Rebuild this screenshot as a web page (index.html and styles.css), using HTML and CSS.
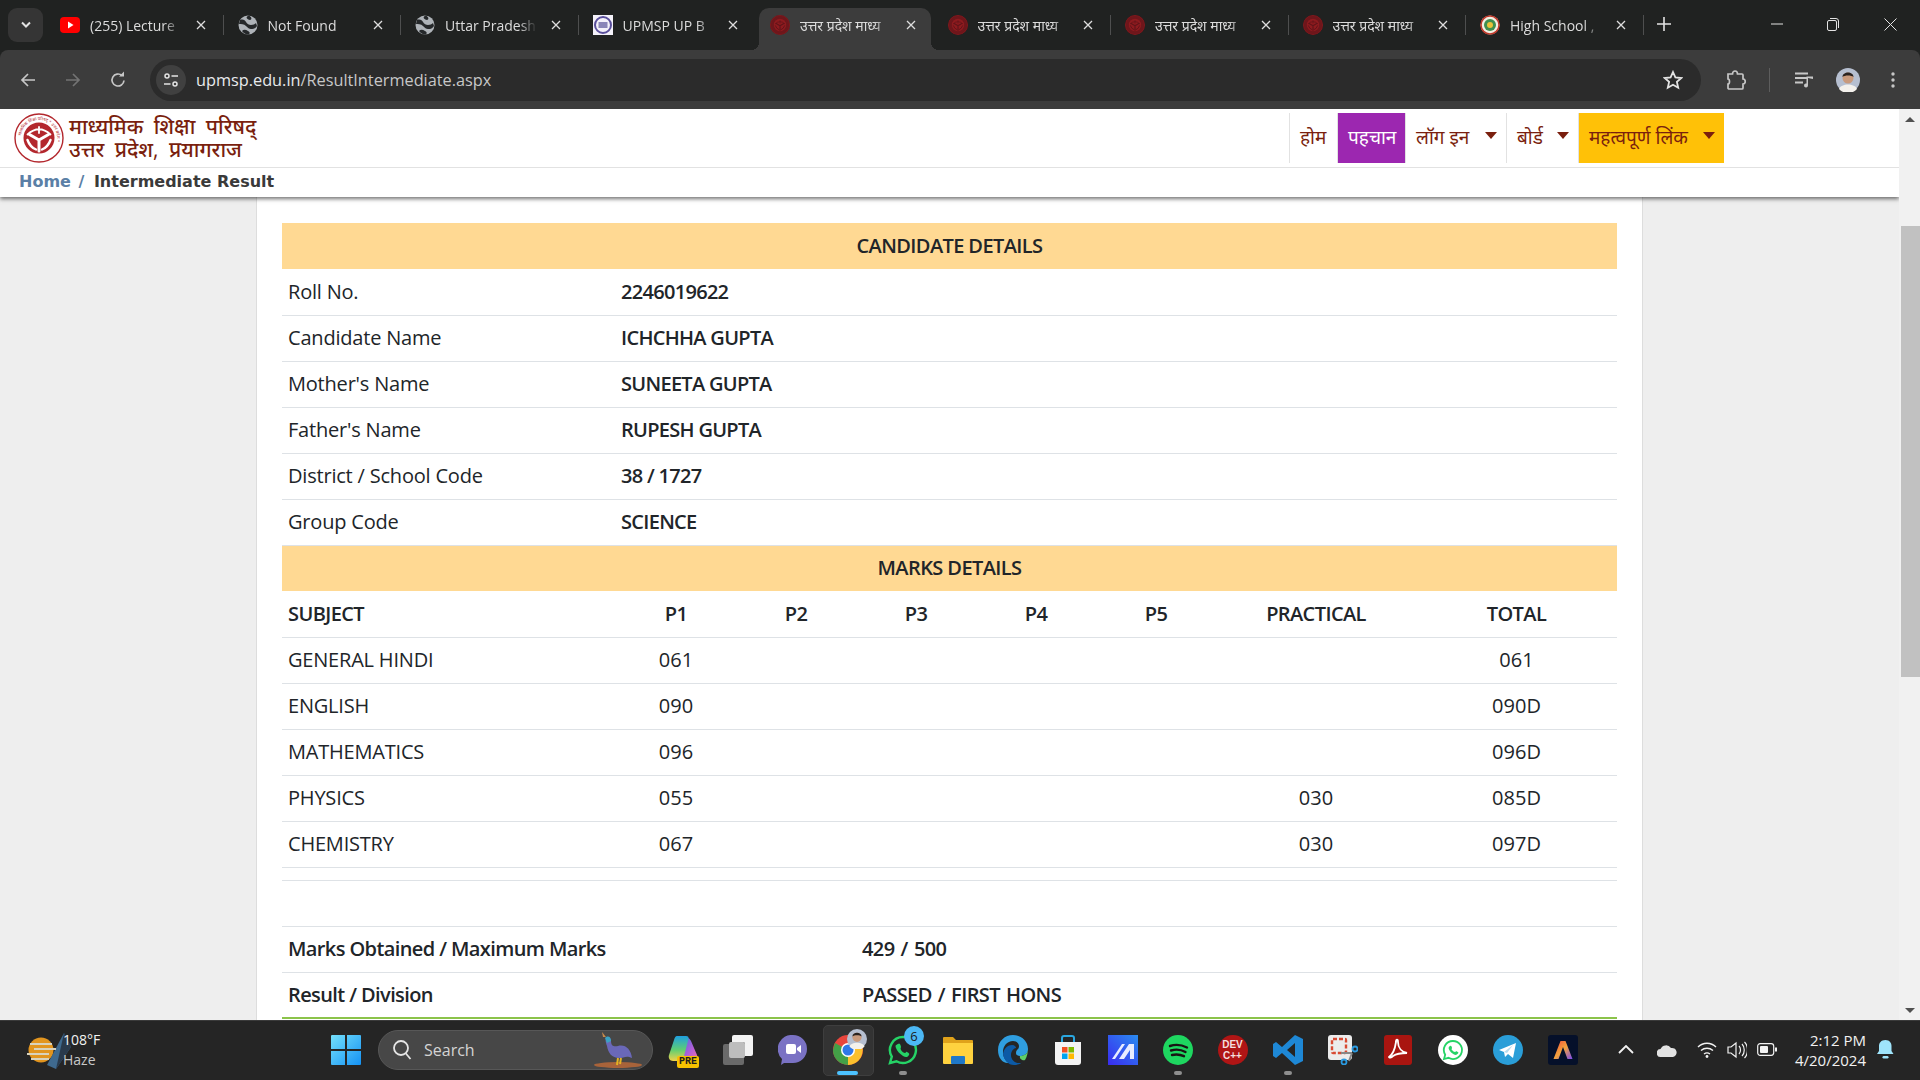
FILE: index.html
```html
<!DOCTYPE html>
<html lang="hi">
<head>
    <meta charset="UTF-8">
    <title>Intermediate Result</title>
    <link rel="stylesheet" href="styles.css">
</head>
<body>
    <svg class="defs" width="0" height="0">
        <symbol id="emblem" viewBox="0 0 50 50">
            <circle cx="25" cy="25" r="24" fill="none" stroke="currentColor" stroke-width="1.4"/>
            <circle cx="25" cy="25" r="15.500" fill="currentColor"/>
            <g fill="none" stroke="var(--emblem-light, #fff)" stroke-linecap="round">
                <path d="M25 27L15.500 21.500M25 27L34.500 21.500M25 27V38" stroke-width="3"/>
                <path d="M13.500 21.500Q25 11 36.500 21.500M25 14v6" stroke-width="1.800"/>
                <path d="M13.500 27Q16 34 22 36.500M36.500 27Q34 34 28 36.500" stroke-width="2.400"/>
            </g>
        </symbol>
        <symbol id="globe" viewBox="0 0 20 20">
            <circle cx="10" cy="10" r="9.500" fill="#aeb3b8"/>
            <path d="M2 5c3-1 5 0 6 2s3 3 5 3 4-1 5-2l1 3c-2 3-4 3-6 3s-3-1-5-3-5-2-7-2zM11 .5c2 1 3 3 2 4s-3 0-4-1 0-2.500 2-3zM4 16c2-2 4-1 6 0s2 2 1 3.500c-3 .5-5-1-7-3.500z" fill="#25282a"/>
        </symbol>
        <symbol id="close-x" viewBox="0 0 10 10">
            <path d="M1 1l8 8M9 1l-8 8" fill="none" stroke="currentColor" stroke-width="1.3"/>
        </symbol>
    </svg>

    <div class="tabstrip">
        <div class="tab-search">
            <svg width="12" height="8" viewBox="0 0 12 8"><path d="M2 1.500l4 4 4-4" fill="none" stroke="#e3e3e3" stroke-width="2"/></svg>
        </div>
        <div class="tabs">
            <div class="tab">
                <svg class="tab-icon" viewBox="0 0 20 20"><rect y="2" width="20" height="16" rx="4" fill="#f00"/><path d="M8 6.500l5.500 3.500L8 13.500z" fill="#fff"/></svg>
                <span class="tab-title">(255) Lecture</span>
                <svg class="tab-close"><use href="#close-x"/></svg>
            </div>
            <div class="tab">
                <svg class="tab-icon"><use href="#globe"/></svg>
                <span class="tab-title">Not Found</span>
                <svg class="tab-close"><use href="#close-x"/></svg>
            </div>
            <div class="tab">
                <svg class="tab-icon"><use href="#globe"/></svg>
                <span class="tab-title">Uttar Pradesh</span>
                <svg class="tab-close"><use href="#close-x"/></svg>
            </div>
            <div class="tab tab-nosep">
                <svg class="tab-icon" viewBox="0 0 20 20"><rect width="20" height="20" fill="#f4f2fa"/><circle cx="10" cy="10" r="8" fill="none" stroke="#5a4f9c" stroke-width="2"/><rect x="5.500" y="7" width="9" height="6" fill="#8a86b8"/></svg>
                <span class="tab-title">UPMSP UP B</span>
                <svg class="tab-close"><use href="#close-x"/></svg>
            </div>
            <div class="tab tab-active tab-nosep">
                <svg class="tab-icon emblem-dark"><use href="#emblem"/></svg>
                <span class="tab-title">उत्तर प्रदेश माध्य</span>
                <svg class="tab-close"><use href="#close-x"/></svg>
            </div>
            <div class="tab">
                <svg class="tab-icon emblem-dark"><use href="#emblem"/></svg>
                <span class="tab-title">उत्तर प्रदेश माध्य</span>
                <svg class="tab-close"><use href="#close-x"/></svg>
            </div>
            <div class="tab">
                <svg class="tab-icon emblem-dark"><use href="#emblem"/></svg>
                <span class="tab-title">उत्तर प्रदेश माध्य</span>
                <svg class="tab-close"><use href="#close-x"/></svg>
            </div>
            <div class="tab">
                <svg class="tab-icon emblem-dark"><use href="#emblem"/></svg>
                <span class="tab-title">उत्तर प्रदेश माध्य</span>
                <svg class="tab-close"><use href="#close-x"/></svg>
            </div>
            <div class="tab">
                <svg class="tab-icon" viewBox="0 0 20 20"><circle cx="10" cy="10" r="9.500" fill="#f2efe4"/><circle cx="10" cy="10" r="9" fill="none" stroke="#c0392b" stroke-width="1.500"/><circle cx="10" cy="10" r="6" fill="#3f8f4f"/><circle cx="10" cy="10" r="3" fill="#e8c23a"/></svg>
                <span class="tab-title">High School ,</span>
                <svg class="tab-close"><use href="#close-x"/></svg>
            </div>
        </div>
        <svg class="new-tab" width="14" height="14" viewBox="0 0 14 14"><path d="M7 0v14M0 7h14" stroke="#e3e3e3" stroke-width="1.600"/></svg>
        <div class="window-controls">
            <svg class="win-min" width="12" height="2" viewBox="0 0 12 2"><path d="M0 1h12" stroke="#e3e3e3"/></svg>
            <svg class="win-max" width="12" height="13" viewBox="0 0 12 13"><rect x=".5" y="2.500" width="9" height="10" rx="1.500" fill="none" stroke="#e3e3e3"/><path d="M3 .5h6a2.500 2.500 0 0 1 2.500 2.500v7" fill="none" stroke="#e3e3e3"/></svg>
            <svg class="win-close" width="13" height="13" viewBox="0 0 13 13"><path d="M.5.5l12 12M12.500.5l-12 12" stroke="#e3e3e3"/></svg>
        </div>
    </div>

    <div class="toolbar">
        <button class="tool-btn">
            <svg width="18" height="18" viewBox="0 0 18 18"><path d="M16 9H3M9 3L3 9l6 6" fill="none" stroke="#c7c7c7" stroke-width="1.700"/></svg>
        </button>
        <button class="tool-btn">
            <svg width="18" height="18" viewBox="0 0 18 18"><path d="M2 9h13M9 3l6 6-6 6" fill="none" stroke="#737373" stroke-width="1.700"/></svg>
        </button>
        <button class="tool-btn">
            <svg width="18" height="18" viewBox="0 0 18 18"><path d="M15 9.500A6 6 0 1 1 13 4.500" fill="none" stroke="#c7c7c7" stroke-width="1.700"/><path d="M10 5.500h5v-5z" fill="#c7c7c7"/></svg>
        </button>
        <div class="omnibox">
            <span class="site-info">
                <svg width="16" height="16" viewBox="0 0 16 16"><circle cx="4" cy="4" r="2" fill="none" stroke="#e3e3e3" stroke-width="1.500"/><path d="M8.500 4H15M1 12h6.500" stroke="#e3e3e3" stroke-width="1.500"/><circle cx="12" cy="12" r="2" fill="none" stroke="#e3e3e3" stroke-width="1.500"/></svg>
            </span>
            <span class="url"><span class="url-host">upmsp.edu.in</span>/ResultIntermediate.aspx</span>
            <svg class="star" width="20" height="20" viewBox="0 0 20 20"><path d="M10 2l2.400 5.400 5.900.6-4.400 3.900 1.300 5.800L10 14.700l-5.200 3 1.300-5.800L1.700 8l5.900-.6z" fill="none" stroke="#e3e3e3" stroke-width="1.800"/></svg>
        </div>
        <svg class="puzzle" width="20" height="22" viewBox="0 0 20 22"><path d="M2 5h4.500c0-4 5-4 5 0H16a1 1 0 0 1 1 1v4c3 0 3 5 0 5v4a1 1 0 0 1-1 1H3a1 1 0 0 1-1-1v-4c2 0 2-5 0-5z" fill="none" stroke="#c7c7c7" stroke-width="1.700"/></svg>
        <span class="tool-sep"></span>
        <svg class="media" width="20" height="18" viewBox="0 0 20 18"><path d="M1 2.500h13M1 7h13M1 11.500h8" stroke="#c7c7c7" stroke-width="1.800"/><path d="M14 7v7.500a2 2 0 1 1-1.500-2V5.500H19V8z" fill="#c7c7c7"/></svg>
        <svg class="avatar" width="24" height="24" viewBox="0 0 24 24"><circle cx="12" cy="12" r="12" fill="#b6bfd0"/><circle cx="12" cy="10" r="5.500" fill="#c99a7c"/><path d="M6.500 9c0-6 11-6 11 0-2-2-9-2-11 0z" fill="#2a2320"/><path d="M3 21c2-6 16-6 18 0a12 12 0 0 1-18 0z" fill="#f4f1ec"/></svg>
        <svg class="kebab" width="4" height="16" viewBox="0 0 4 16"><circle cx="2" cy="2" r="1.700" fill="#c7c7c7"/><circle cx="2" cy="8" r="1.700" fill="#c7c7c7"/><circle cx="2" cy="14" r="1.700" fill="#c7c7c7"/></svg>
    </div>

    <div class="viewport">
        <div class="site">
            <header class="site-header">
                <div class="brand-row">
                    <a class="brand">
                        <svg class="logo" viewBox="0 0 50 50">
                            <defs><path id="ring" d="M25 25m-18 0a18 18 0 1 1 36 0a18 18 0 1 1-36 0"/></defs>
                            <use href="#emblem"/>
                            <text class="logo-ring"><textPath href="#ring" startOffset="2%">माध्यमिक शिक्षा परिषद् * उत्तर प्रदेश *</textPath></text>
                        </svg>
                        <span class="brand-text">
                            <span>माध्यमिक शिक्षा परिषद्</span>
                            <span>उत्तर प्रदेश, प्रयागराज</span>
                        </span>
                    </a>
                    <nav class="main-nav">
                        <a class="nav-item nav-home">होम</a>
                        <a class="nav-item nav-id">पहचान</a>
                        <a class="nav-item nav-login">लॉग इन <i class="caret"></i></a>
                        <a class="nav-item nav-board">बोर्ड <i class="caret"></i></a>
                        <a class="nav-item nav-links">महत्वपूर्ण लिंक <i class="caret"></i></a>
                    </nav>
                </div>
                <div class="breadcrumb"><a>Home /</a> <span>Intermediate Result</span></div>
            </header>

            <main class="panel">
                <table class="result-table">
                    <colgroup>
                        <col class="col-subject">
                        <col class="col-paper"><col class="col-paper"><col class="col-paper"><col class="col-paper"><col class="col-paper">
                        <col class="col-practical">
                        <col>
                    </colgroup>
                    <tr class="band"><td colspan="8">CANDIDATE DETAILS</td></tr>
                    <tr><td>Roll No.</td><td colspan="7" class="val">2246019622</td></tr>
                    <tr><td>Candidate Name</td><td colspan="7" class="val">ICHCHHA GUPTA</td></tr>
                    <tr><td>Mother's Name</td><td colspan="7" class="val">SUNEETA GUPTA</td></tr>
                    <tr><td>Father's Name</td><td colspan="7" class="val">RUPESH GUPTA</td></tr>
                    <tr><td>District / School Code</td><td colspan="7" class="val">38 / 1727</td></tr>
                    <tr><td>Group Code</td><td colspan="7" class="val">SCIENCE</td></tr>
                    <tr class="band"><td colspan="8">MARKS DETAILS</td></tr>
                    <tr class="marks-head">
                        <td>SUBJECT</td><td>P1</td><td>P2</td><td>P3</td><td>P4</td><td>P5</td><td>PRACTICAL</td><td>TOTAL</td>
                    </tr>
                    <tr class="marks"><td>GENERAL HINDI</td><td>061</td><td></td><td></td><td></td><td></td><td></td><td>061</td></tr>
                    <tr class="marks"><td>ENGLISH</td><td>090</td><td></td><td></td><td></td><td></td><td></td><td>090D</td></tr>
                    <tr class="marks"><td>MATHEMATICS</td><td>096</td><td></td><td></td><td></td><td></td><td></td><td>096D</td></tr>
                    <tr class="marks"><td>PHYSICS</td><td>055</td><td></td><td></td><td></td><td></td><td>030</td><td>085D</td></tr>
                    <tr class="marks"><td>CHEMISTRY</td><td>067</td><td></td><td></td><td></td><td></td><td>030</td><td>097D</td></tr>
                </table>
                <div class="result-gap"></div>
                <table class="summary-table">
                    <tr><td>Marks Obtained / Maximum Marks</td><td>429 / 500</td></tr>
                    <tr><td>Result / Division</td><td>PASSED / FIRST HONS</td></tr>
                    <tr class="summary-end"><td colspan="2"></td></tr>
                </table>
            </main>
        </div>
        <div class="scrollbar">
            <i class="arrow-up"></i>
            <div class="thumb"></div>
            <i class="arrow-down"></i>
        </div>
    </div>

    <footer class="taskbar">
        <div class="weather">
            <svg class="weather-icon" width="48" height="42" viewBox="0 0 48 42">
                <circle cx="17" cy="21" r="12.500" fill="#e2951f"/>
                <path d="M40 4L47 18 32 40 23 36z" fill="#3f6a8f"/>
                <path d="M40 4L47 18 32 40z" fill="#2a3a4c"/>
                <path d="M6 15h22M10 20h22M3 25h22M7 30h18" stroke="#d8d2bc" stroke-width="2"/>
            </svg>
            <div class="weather-text"><span>108°F</span><span class="weather-sub">Haze</span></div>
        </div>
        <svg class="start" width="30" height="30" viewBox="0 0 30 30">
            <defs><linearGradient id="win" x1="0" y1="0" x2="1" y2="1"><stop offset="0" stop-color="#74e0fb"/><stop offset="1" stop-color="#1592f4"/></linearGradient></defs>
            <path d="M0 1a1 1 0 0 1 1-1h13v14H0zM16 0h13a1 1 0 0 1 1 1v13H16zM0 16h14v14H1a1 1 0 0 1-1-1zM16 16h14v13a1 1 0 0 1-1 1H16z" fill="url(#win)"/>
        </svg>
        <div class="search-box">
            <svg width="20" height="22" viewBox="0 0 20 22"><circle cx="9" cy="9" r="7" fill="none" stroke="#e6e6e6" stroke-width="1.800"/><path d="M13.500 14l5 6" stroke="#e6e6e6" stroke-width="1.800"/></svg>
            <span>Search</span>
            <svg class="search-bird" width="52" height="40" viewBox="0 0 50 40">
                <ellipse cx="25" cy="35" rx="24" ry="3" fill="#a8633a"/>
                <path d="M13 8c3-2 5 0 5 3 0 5 3 6 7 5 7-2 13 3 14 12-6-3-8 0-13 0-7 0-11-5-12-12-1-3-2-5-1-8z" fill="#6a68b8"/>
                <path d="M12 8c3-3 6-1 6 3l-4 2z" fill="#3aa3c4"/>
                <path d="M9 2l4 5-3 0z" fill="#c98a4a"/>
                <path d="M25 28l-1 7M28 28l-1 6" stroke="#e4b322" stroke-width="2"/>
            </svg>
        </div>
        <div class="task-icons">
            <span class="task-icon">
                <svg viewBox="0 0 30 30">
                    <defs>
                        <linearGradient id="cop-a" x1="0" y1="0" x2="0" y2="1"><stop offset="0" stop-color="#1f9fe0"/><stop offset=".55" stop-color="#5fce72"/><stop offset="1" stop-color="#f2d24a"/></linearGradient>
                        <linearGradient id="cop-b" x1="0" y1="0" x2="1" y2="1"><stop offset="0" stop-color="#3a6fe0"/><stop offset=".6" stop-color="#b45fd8"/><stop offset="1" stop-color="#f070a8"/></linearGradient>
                    </defs>
                    <path d="M17 3c2-1 5 0 6 3l6 14c1 3-1 6-4 6H12z" fill="url(#cop-b)"/>
                    <path d="M9 1h9c2 0 3 1 2.500 3L16 21c-1 3-3 5-6 5H5c-3 0-5-3-4-6L6 5c.5-2 1.500-4 3-4z" fill="url(#cop-a)"/>
                </svg>
                <b class="pre-badge">PRE</b>
            </span>
            <span class="task-icon">
                <svg viewBox="0 0 30 30"><rect y="9" width="21" height="21" rx="2" fill="#6a6a6a"/><rect x="6" y="7" width="16" height="16" rx="2" fill="#bdbdbd"/><path d="M9 2a2 2 0 0 1 2-2h17a2 2 0 0 1 2 2v17a2 2 0 0 1-2 2h-6V9a2 2 0 0 0-2-2H9z" fill="#f3f3f3"/></svg>
            </span>
            <span class="task-icon">
                <svg viewBox="0 0 30 30"><path d="M15 0a14 14 0 0 1 0 28H6l-3 2 1-6A14 14 0 0 1 15 0z" fill="#7a72c4"/><rect x="8" y="9" width="10" height="10" rx="2" fill="#fff"/><path d="M19 13l4-3v8l-4-3z" fill="#fff"/></svg>
            </span>
            <span class="task-icon task-active">
                <svg viewBox="0 0 30 30"><circle cx="15" cy="15" r="15" fill="#e8453c"/><path d="M15 15l13-7a15 15 0 0 1-13 22z" fill="#fbc02d"/><path d="M15 15L2 8 0 15a15 15 0 0 0 15 15z" fill="#43a047"/><circle cx="15" cy="15" r="7" fill="#fff"/><circle cx="15" cy="15" r="5.500" fill="#2f78e8"/></svg>
                <svg class="chrome-avatar" viewBox="0 0 24 24"><circle cx="12" cy="12" r="12" fill="#b6bfd0"/><circle cx="12" cy="10" r="5.500" fill="#c99a7c"/><path d="M6.500 9c0-6 11-6 11 0-2-2-9-2-11 0z" fill="#2a2320"/><path d="M3 21c2-6 16-6 18 0a12 12 0 0 1-18 0z" fill="#f4f1ec"/></svg>
            </span>
            <span class="task-icon task-running">
                <svg viewBox="0 0 30 30"><path d="M15 2a13 13 0 1 1-6.500 24.300L2 28l1.800-6.300A13 13 0 0 1 15 2z" fill="none" stroke="#25d366" stroke-width="2.400"/><path d="M10 9c2-2 3 2 3 3s-1 1 0 3 3 3 4 3 1-2 2-1 3 1 2 3-3 3-6 1-6-5-7-8 0-3 2-4z" fill="#25d366"/></svg>
                <b class="count-badge">6</b>
            </span>
            <span class="task-icon">
                <svg viewBox="0 0 30 30"><path d="M0 3a1 1 0 0 1 1-1h9l3 3h16a1 1 0 0 1 1 1v6H0z" fill="#e0a21a"/><path d="M0 8h30v20a1 1 0 0 1-1 1H1a1 1 0 0 1-1-1z" fill="#ffd23f"/><rect x="8" y="21" width="14" height="8" rx="1" fill="#1f78c8"/></svg>
            </span>
            <span class="task-icon">
                <svg viewBox="0 0 30 30"><path d="M15 0c8 0 15 6 15 14 0 5-4 7-8 7-2 0-4-1-4-3 0-4 3-3 3-7 0-3-3-5-6-5-6 0-10 5-10 11 0 4 2 9 6 11C5 29 0 23 0 15 0 6 7 0 15 0z" fill="#2f9ee0"/><path d="M5 19c1-6 5-9 9-9 3 0 4 2 4 3-2 0-5 3-5 7 0 5 4 8 8 8 2 0 3 0 4-1-3 2-6 3-9 3-6 0-10-5-11-11z" fill="#0c5aa6"/><path d="M22 21c4 0 8-2 8-7 0 3-1 8-3 11-2 1-6-1-5-4z" fill="#5fd068"/></svg>
            </span>
            <span class="task-icon">
                <svg viewBox="0 0 30 30"><path d="M2 7h26v20a3 3 0 0 1-3 3H5a3 3 0 0 1-3-3z" fill="#f3f3f3"/><path d="M9 7V3a2 2 0 0 1 2-2h8a2 2 0 0 1 2 2v4" fill="none" stroke="#2aa7e0" stroke-width="2"/><rect x="9" y="12" width="5.500" height="5.500" fill="#f25022"/><rect x="15.500" y="12" width="5.500" height="5.500" fill="#7fba00"/><rect x="9" y="18.500" width="5.500" height="5.500" fill="#00a4ef"/><rect x="15.500" y="18.500" width="5.500" height="5.500" fill="#ffb900"/></svg>
            </span>
            <span class="task-icon">
                <svg viewBox="0 0 30 30"><defs><linearGradient id="mm" x1="0" y1="1" x2="1" y2="0"><stop offset="0" stop-color="#3a2bf0"/><stop offset="1" stop-color="#2a8cf0"/></linearGradient></defs><rect width="30" height="30" fill="url(#mm)"/><path d="M4 24L14 9h3L7 24zM11 24L21 9h5v15h-4v-9l-6 9z" fill="#e8ecff"/></svg>
            </span>
            <span class="task-icon task-running">
                <svg viewBox="0 0 30 30"><circle cx="15" cy="15" r="15" fill="#1ed760"/><path d="M7 11c6-2 12-1 17 1.500M8 15.500c5-1.500 10-1 14.500 1.500M9 20c4-1 8-.7 12 1.200" fill="none" stroke="#191414" stroke-width="2.400" stroke-linecap="round"/></svg>
            </span>
            <span class="task-icon">
                <span class="dev-icon">DEV<br>C++</span>
            </span>
            <span class="task-icon task-running">
                <svg viewBox="0 0 30 30"><path d="M22 0l8 4v22l-8 4-13-12-6 5-3-2v-12l3-2 6 5zM22 8l-8 7 8 7z" fill="#1e88d6"/></svg>
            </span>
            <span class="task-icon">
                <svg viewBox="0 0 30 30"><rect width="24" height="25" rx="3" fill="#ececec"/><rect x="4" y="4" width="14" height="14" rx="1" fill="none" stroke="#d84a33" stroke-width="2.400" stroke-dasharray="4 2"/><path d="M13 18l11 0M24 18l-3 8" stroke="#888" stroke-width="2"/><circle cx="27" cy="14" r="2.500" fill="none" stroke="#2a9ae0" stroke-width="1.800"/><circle cx="16" cy="27" r="2.500" fill="none" stroke="#2a9ae0" stroke-width="1.800"/></svg>
            </span>
            <span class="task-icon">
                <svg viewBox="0 0 30 30"><rect x="1" width="28" height="30" rx="3" fill="#a91510"/><path d="M6 22c3-2 6-8 7-15 0-3 2-3 2 0 0 6 4 10 9 11-5 0-11 1-14 3-2 2-4 2-4 1z" fill="none" stroke="#fff" stroke-width="1.800"/></svg>
            </span>
            <span class="task-icon">
                <svg viewBox="0 0 30 30"><circle cx="15" cy="15" r="15" fill="#fff"/><path d="M15 6a9 9 0 1 1-4.500 16.800L6 24l1.200-4.300A9 9 0 0 1 15 6z" fill="none" stroke="#25d366" stroke-width="1.800"/><path d="M12 11c1-1 2 1 2 2s-1 1 0 2 2 2 3 2 1-1 2-.5 2 1 1 2-2 2-4 1-4-3-5-5 0-3 1-3.500z" fill="#25d366"/></svg>
            </span>
            <span class="task-icon">
                <svg viewBox="0 0 30 30"><circle cx="15" cy="15" r="15" fill="#2a9ed8"/><path d="M6 15l17-7-3 15-5-4-3 3-1-5z" fill="#fff"/><path d="M11 17l9-7-6 8z" fill="#b8dcef"/></svg>
            </span>
            <span class="task-icon">
                <svg viewBox="0 0 30 30"><defs><linearGradient id="ae" x1="0" y1="0" x2="1" y2="1"><stop offset="0" stop-color="#f24a3c"/><stop offset=".5" stop-color="#f2a23c"/><stop offset="1" stop-color="#7a4af2"/></linearGradient></defs><rect width="30" height="30" rx="3" fill="#05102a"/><path d="M12.500 6h5l7 18h-5l-4.500-12-4.500 12h-5z" fill="url(#ae)"/></svg>
            </span>
        </div>
        <div class="tray">
            <svg class="tray-chevron" width="16" height="9" viewBox="0 0 16 9"><path d="M1 8l7-7 7 7" fill="none" stroke="#f2f2f2" stroke-width="1.800"/></svg>
            <svg class="tray-cloud" width="20" height="14" viewBox="0 0 20 14"><path d="M4 14a4 4 0 0 1-.500-8A6 6 0 0 1 14 5a4.500 4.500 0 0 1 2 9z" fill="#e2e2e2"/></svg>
            <svg class="tray-wifi" width="20" height="17" viewBox="0 0 20 17"><path d="M1 6c5-5 13-5 18 0M4 9.500c3.500-3 8.500-3 12 0M7 13c2-1.500 4-1.500 6 0" fill="none" stroke="#f2f2f2" stroke-width="1.400"/><circle cx="10" cy="15.500" r="1.400" fill="#f2f2f2"/></svg>
            <svg class="tray-volume" width="20" height="18" viewBox="0 0 20 18"><path d="M1 6h3l5-4v14l-5-4H1z" fill="none" stroke="#f2f2f2" stroke-width="1.200"/><path d="M12 5c2 2 2 6 0 8M15 3c3 3 3 9 0 12M17.500 1c4 4 4 12 0 16" fill="none" stroke="#f2f2f2" stroke-width="1.200"/></svg>
            <svg class="tray-battery" width="20" height="13" viewBox="0 0 20 13"><rect x=".7" y=".7" width="16" height="11.600" rx="2.500" fill="none" stroke="#f2f2f2" stroke-width="1.200"/><rect x="3" y="3" width="8" height="7" rx="1" fill="#f2f2f2"/><rect x="18" y="4.500" width="2" height="4" fill="#f2f2f2"/></svg>
            <div class="clock"><span>2:12 PM</span><span>4/20/2024</span></div>
            <svg class="tray-bell" width="17" height="20" viewBox="0 0 17 20"><path d="M8.500 0c4 0 6 3 6 6v5l2 3H0l2-3V6c0-3 2-6 6.500-6z" fill="#9fe4fb"/><rect x="5.500" y="16" width="6" height="2.500" rx="1.200" fill="#9fe4fb"/></svg>
        </div>
    </footer>
</body>
</html>
```
FILE: styles.css
```css
* {
    box-sizing: border-box;
}
html, body {
    margin: 0;
    width: 1920px;
    height: 1080px;
    overflow: hidden;
}
body {
    display: flex;
    flex-direction: column;
    font-family: "Open Sans", "Noto Sans", "Noto Sans Devanagari", sans-serif;
    background: #202221;
}
.defs {
    position: absolute;
}

/* browser tabs */
.tabstrip {
    height: 50px;
    display: flex;
    align-items: flex-end;
    padding-left: 8px;
    color: #dcdcdc;
    background: #202221;
}
.tab-search {
    width: 35px;
    height: 34px;
    margin: 0 3px 8px 0;
    border-radius: 9px;
    background: #353535;
    display: flex;
    align-items: center;
    justify-content: center;
}
.tabs {
    display: flex;
}
.tab {
    width: 177.5px;
    height: 42px;
    padding: 0 14px 8px 14px;
    display: flex;
    align-items: center;
    position: relative;
    font-size: 14px;
}
.tab::after {
    content: "";
    position: absolute;
    right: 0;
    top: 7px;
    height: 20px;
    width: 1px;
    background: #4e4f4f;
}
.tab-nosep::after {
    display: none;
}
.tab-active {
    width: 172.5px;
    margin: 0 2.5px;
    padding: 0 11.5px 8px;
    background: #3c3c3c;
    border-radius: 10px 10px 0 0;
}
.tab-active::before, .tab-active::after {
    content: "";
    display: block;
    position: absolute;
    top: auto;
    bottom: 0;
    width: 8px;
    height: 8px;
    background: radial-gradient(circle at 0 0, transparent 8px, #3c3c3c 8px);
}
.tab-active::before {
    left: -8px;
}
.tab-active::after {
    right: -8px;
    background: radial-gradient(circle at 100% 0, transparent 8px, #3c3c3c 8px);
}
.tab-icon {
    width: 20px;
    height: 20px;
    flex: none;
}
.emblem-dark {
    --emblem-light: #611419;
    color: #8e1b1f;
    border-radius: 50%;
    background: #6e161b;
}
.tab-title {
    flex: 1;
    margin-left: 10px;
    white-space: nowrap;
    overflow: hidden;
    -webkit-mask-image: linear-gradient(to right, #000 74px, transparent 92px);
    mask-image: linear-gradient(to right, #000 74px, transparent 92px);
}
.tab-close {
    width: 10px;
    height: 10px;
    flex: none;
    margin: 0 4px 0 3px;
    color: #dedede;
}
.new-tab {
    margin: 0 0 19px 13px;
}
.window-controls {
    margin-left: auto;
    height: 50px;
    width: 152px;
    padding-bottom: 2px;
    display: flex;
    align-items: center;
}
.win-min {
    margin-left: 3px;
}
.win-max {
    margin-left: 44px;
}
.win-close {
    margin-left: 45px;
}

/* address bar */
.toolbar {
    height: 59px;
    padding-left: 5px;
    display: flex;
    align-items: center;
    background: #3c3c3c;
    border-radius: 8px 8px 0 0;
}
.tool-btn {
    width: 45px;
    height: 45px;
    padding: 0;
    border: 0;
    background: none;
    display: flex;
    align-items: center;
    justify-content: center;
}
.omnibox {
    width: 1551px;
    height: 42px;
    margin-left: 10px;
    padding: 0 17px 0 6px;
    border-radius: 21px;
    background: #2b2b2b;
    display: flex;
    align-items: center;
    font-size: 16.3px;
    color: #c7c7c7;
}
.site-info {
    width: 30px;
    height: 30px;
    border-radius: 50%;
    background: #404040;
    display: flex;
    align-items: center;
    justify-content: center;
}
.url {
    margin-left: 10px;
}
.url-host {
    color: #e8eaed;
}
.star {
    margin-left: auto;
    margin-right: 1px;
}
.puzzle {
    margin-left: 25px;
}
.tool-sep {
    width: 1px;
    height: 24px;
    margin-left: 23px;
    background: #5d5d5d;
}
.media {
    margin-left: 24px;
}
.avatar {
    margin-left: 22px;
}
.kebab {
    margin-left: 31px;
}

/* the site */
.viewport {
    flex: 1;
    min-height: 0;
    display: flex;
    background: #eee;
}
.site {
    flex: 1;
    min-width: 0;
    overflow: hidden;
    display: flex;
    flex-direction: column;
}
.site-header {
    position: relative;
    z-index: 2;
    background: #fff;
    box-shadow: 0 2px 4px rgba(0, 0, 0, .55);
}
.brand-row {
    height: 59px;
    padding: 4px 175px 4px 14px;
    display: flex;
    align-items: flex-start;
    border-bottom: 1px solid #e2e2e2;
}
.brand {
    display: flex;
    align-items: center;
}
.logo {
    width: 50px;
    height: 50px;
    color: #b3272d;
}
.logo-ring {
    font-size: 4.200px;
    fill: #b3272d;
}
.brand-text {
    margin-left: 5px;
    display: flex;
    flex-direction: column;
    font-size: 21px;
    font-weight: 500;
    line-height: 23px;
    word-spacing: 5px;
    color: #7a1f0e;
    white-space: nowrap;
}
.main-nav {
    margin-left: auto;
    height: 50px;
    display: flex;
    font-size: 19px;
    color: #7a1f0e;
}
.nav-item {
    display: flex;
    align-items: center;
    justify-content: space-between;
    padding: 0 9px 2px 10px;
    border-left: 1px solid #e2e2e2;
    white-space: nowrap;
}
.nav-home {
    width: 48px;
}
.nav-id {
    width: 68px;
    background: #9c27b0;
    color: #fff;
}
.nav-login {
    width: 101px;
}
.nav-board {
    width: 72px;
}
.nav-links {
    width: 146px;
    background: #ffc107;
}
.caret {
    width: 0;
    height: 0;
    margin-bottom: 3px;
    border-style: solid;
    border-width: 7px 6px 0;
    border-color: #7a1f0e transparent transparent;
}
.breadcrumb {
    height: 29px;
    padding: 1px 19px 0;
    font-family: "DejaVu Sans", sans-serif;
    font-weight: bold;
    font-size: 16px;
    line-height: 26px;
    color: #3a3a3a;
}
.breadcrumb a {
    margin-right: 4px;
    word-spacing: 2px;
    color: #5b7fa6;
}

.panel {
    width: 1387px;
    margin-left: 256px;
    flex: 1;
    padding: 26px 25px 0;
    background: #fff;
    border-left: 1px solid #ddd;
    border-right: 1px solid #ddd;
    font-size: 20px;
    color: #212529;
}
table {
    width: 100%;
    border-collapse: collapse;
    table-layout: fixed;
}
td {
    height: 46px;
    padding: 0 6px 1px;
    border-bottom: 1px solid #dee2e6;
    white-space: nowrap;
    letter-spacing: -.2px;
}
.col-subject {
    width: 334px;
}
.col-paper {
    width: 120px;
}
.col-practical {
    width: 200px;
}
.band td {
    background: #ffd993;
    border-bottom: 0;
    text-align: center;
    font-weight: 600;
    letter-spacing: -.6px;
}
.val {
    padding-left: 5px;
    font-weight: 600;
    letter-spacing: -.7px;
}
.marks-head td {
    font-weight: 600;
    text-align: center;
    letter-spacing: -.6px;
}
.marks td {
    text-align: center;
    letter-spacing: 0;
}
.marks-head td:first-child, .marks td:first-child {
    text-align: left;
}
.marks td:first-child {
    letter-spacing: -.2px;
}
.result-gap {
    height: 13px;
    border-bottom: 1px solid #dee2e6;
}
.summary-table {
    margin-top: 45px;
    border-top: 1px solid #dee2e6;
    font-weight: 600;
}
.summary-table td {
    letter-spacing: -.6px;
    word-spacing: 1.5px;
}
.summary-table td:first-child {
    width: 574px;
    word-spacing: 0;
}
.summary-end td {
    border-top: 2px solid #8bc34a;
    border-bottom: 0;
}

/* page scrollbar */
.scrollbar {
    width: 21px;
    background: #f1f1f1;
    display: flex;
    flex-direction: column;
    align-items: flex-end;
    position: relative;
}
.thumb {
    width: 19px;
    height: 451px;
    margin-top: 117px;
    background: #c1c1c1;
}
.arrow-up, .arrow-down {
    position: absolute;
    right: 5px;
    width: 0;
    height: 0;
    border-left: 5px solid transparent;
    border-right: 5px solid transparent;
}
.arrow-up {
    top: 8px;
    border-bottom: 5px solid #505050;
}
.arrow-down {
    bottom: 7px;
    border-top: 5px solid #505050;
}

/* windows taskbar */
.taskbar {
    height: 60px;
    padding-bottom: 2px;
    display: flex;
    align-items: center;
    position: relative;
    background: #252525;
    border-top: 1px solid #3a3a3a;
    color: #f2f2f2;
}
.weather {
    width: 327px;
    padding-left: 24px;
    display: flex;
    align-items: center;
}
.weather-icon {
    flex: none;
}
.weather-text {
    position: relative;
    margin-left: -9px;
    display: flex;
    flex-direction: column;
    font-size: 14px;
    line-height: 20px;
}
.weather-sub {
    color: #c9c9c9;
}
.start {
    margin-left: 4px;
    flex: none;
}
.search-box {
    width: 275px;
    height: 40px;
    margin-left: 17px;
    padding: 0 8px 0 13px;
    flex: none;
    display: flex;
    align-items: center;
    border-radius: 20px;
    border: 1px solid #575757;
    background: #474747;
    font-size: 16px;
    color: #d4d4d4;
}
.search-box span {
    margin-left: 12px;
}
.search-bird {
    margin-left: auto;
}
.task-icons {
    display: flex;
    margin-left: 2px;
}
.task-icon {
    width: 55px;
    height: 50px;
    position: relative;
    display: flex;
    align-items: center;
    justify-content: center;
}
.task-icon > svg {
    width: 30px;
    height: 30px;
}
.pre-badge {
    position: absolute;
    left: 22px;
    bottom: 7px;
    padding: 0 2px;
    border-radius: 2px;
    background: #f7c100;
    color: #1d1d1d;
    font: bold 10px/12px "Liberation Mono", monospace;
}
.task-active::before {
    content: "";
    position: absolute;
    left: 3px;
    top: 0;
    width: 49px;
    height: 49px;
    border-radius: 5px;
    background: #333;
    border: 1px solid #3e3e3e;
}
.task-active::after {
    content: "";
    position: absolute;
    left: 17px;
    bottom: 0;
    width: 21px;
    height: 4px;
    border-radius: 2px;
    background: #4cc2ff;
}
.task-active > svg {
    position: relative;
}
.task-active > .chrome-avatar {
    position: absolute;
    left: 27px;
    top: 4px;
    width: 20px;
    height: 20px;
}
.task-running::after {
    content: "";
    position: absolute;
    left: 23.500px;
    bottom: 0;
    width: 8px;
    height: 4px;
    border-radius: 2px;
    background: #8e8e8e;
}
.count-badge {
    position: absolute;
    left: 29px;
    top: 1px;
    width: 20px;
    height: 20px;
    border-radius: 50%;
    background: #4cb8f5;
    color: #1b1b1b;
    font-size: 13px;
    font-weight: normal;
    line-height: 20px;
    text-align: center;
}
.dev-icon {
    width: 30px;
    height: 30px;
    border-radius: 50%;
    background: #b01515;
    color: #f4dede;
    font: bold 10px/11px "Liberation Sans", sans-serif;
    text-align: center;
    padding-top: 4px;
}
.tray {
    flex: 1;
    display: flex;
    align-items: center;
}
.tray-chevron {
    margin-left: 28px;
}
.tray-cloud {
    margin-left: 23px;
}
.tray-wifi {
    margin-left: 20px;
}
.tray-volume {
    margin-left: 10px;
}
.tray-battery {
    margin-left: 10px;
}
.clock {
    width: 89px;
    display: flex;
    flex-direction: column;
    align-items: flex-end;
    font-size: 15px;
    line-height: 20px;
}
.tray-bell {
    margin-left: 11px;
}
```
